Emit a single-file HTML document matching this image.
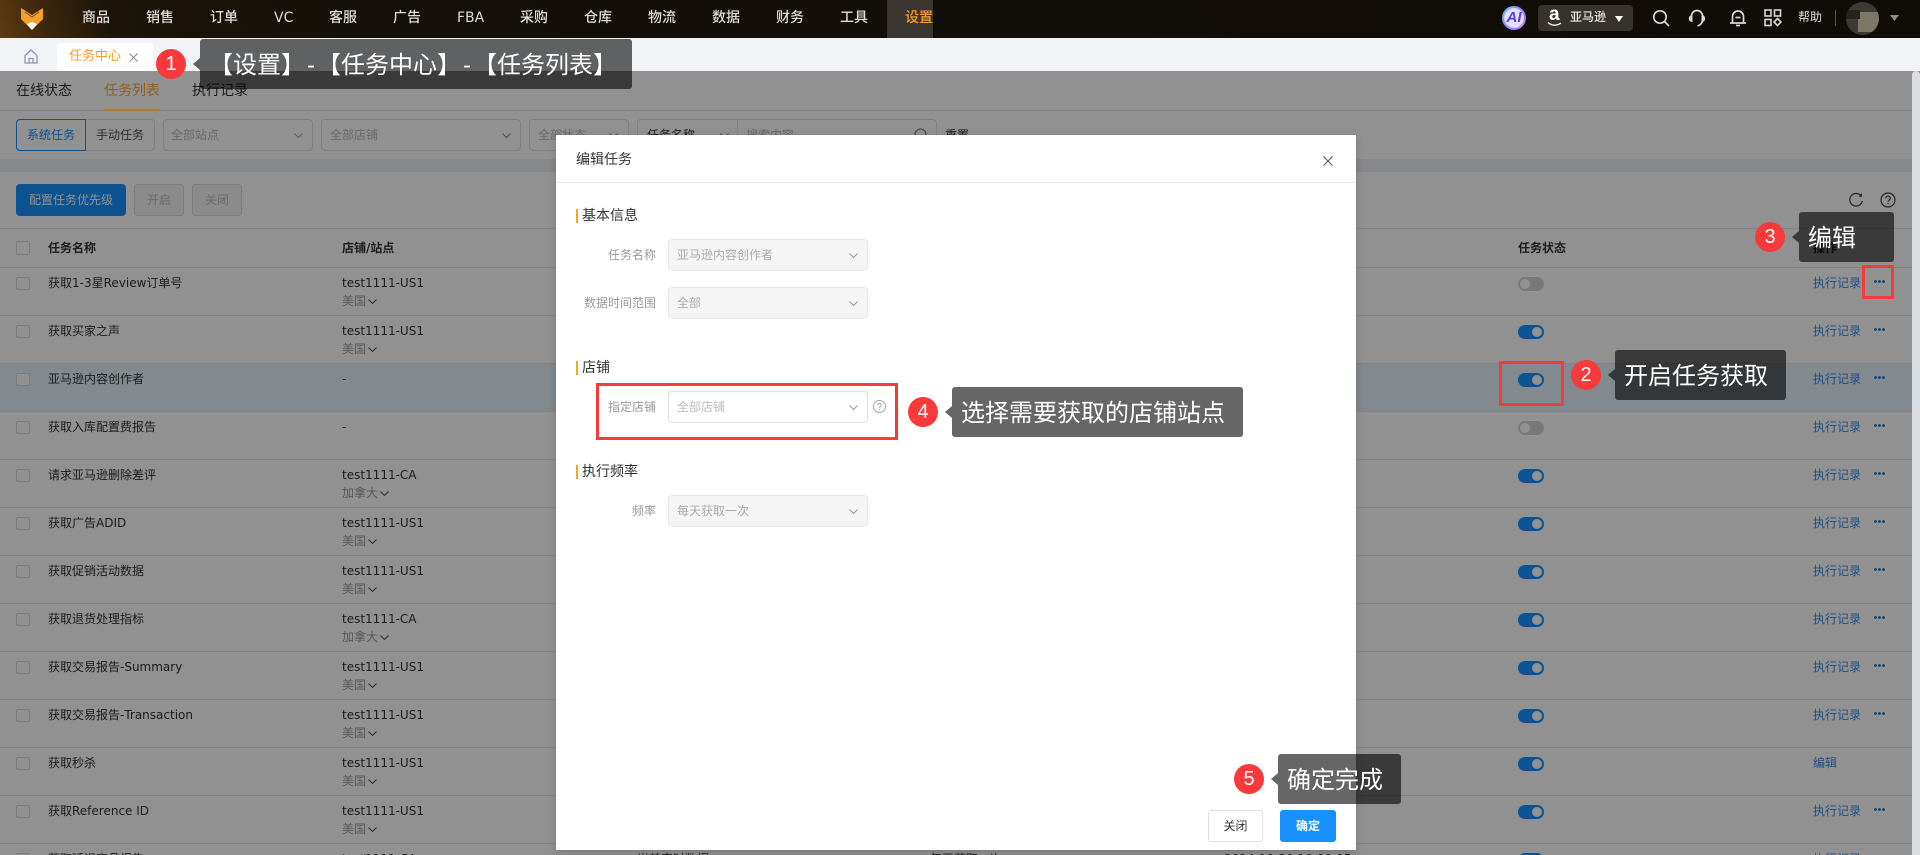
<!DOCTYPE html>
<html lang="zh-CN">
<head>
<meta charset="utf-8">
<title>任务列表</title>
<style>
*{box-sizing:border-box}
html,body{margin:0;padding:0;width:1920px;height:855px;overflow:hidden;background:#fff}
body{position:relative;font-family:"DejaVu Sans","Noto Sans CJK SC",sans-serif;font-size:12px;color:#333}
.a{position:absolute;white-space:nowrap}
svg{position:absolute;display:block;overflow:visible}
#nav{left:0;top:0;width:1920px;height:38px;background:linear-gradient(72deg,#5e3c12 0,#3e280d 45px,#1c1409 110px,#140f08 340px,#100c07 100%)}
.m{top:8px;font-size:14px;line-height:20px;color:#dcdcdc;font-weight:500}
#tabs{left:0;top:38px;width:1920px;height:33px;background:#f1f3f7}
#ov{left:0;top:71px;width:1920px;height:784px;background:rgba(0,0,0,.43);z-index:5}
#sb{left:1912px;top:71px;width:8px;height:784px;background:#dcdde2;border-radius:4px 4px 0 0;z-index:6}
.sel{height:32px;border:1px solid #dcdfe6;border-radius:4px;background:#fff}
.ph{color:#bbb;line-height:16px;top:127px}
.r{position:absolute;left:0;width:1912px;height:48px;border-top:1px solid #e6e6e6}
.r .c{position:absolute;left:16px;top:9px;width:14px;height:13px;border:1px solid #d9d9d9;border-radius:2px;background:#fff}
.r span,.r em{position:absolute;white-space:nowrap;line-height:16px;font-style:normal}
.r .n{left:48px;top:7px}
.r .s{left:342px;top:7px}
.r em{left:342px;top:25px;color:#999}
.r .l{left:1813px;top:7px;color:#3f8ae6}
.r .d{position:absolute;left:1874px;top:12px;width:11px;height:3px;background:radial-gradient(circle at 1.5px 1.5px,#2a80e0 1.4px,transparent 1.5px) 0 0/4px 3px repeat-x}
.t{position:absolute;left:1518px;top:9px;width:26px;height:14px;border-radius:7px;background:#1890ff}
.t:after{content:"";position:absolute;left:14px;top:2px;width:10px;height:10px;border-radius:50%;background:#fff}
.t.o{background:#d2d4d9}
.t.o:after{left:2px}
.cv{width:9px;height:5px}
svg.v{position:static;display:inline-block;width:9px;height:5px;margin-left:2px;vertical-align:1px;fill:none;stroke:#555;stroke-width:1.1}
#modal{left:556px;top:135px;width:800px;height:715px;background:#fff;z-index:7;box-shadow:0 2px 8px rgba(0,0,0,.18)}
.st{left:20px;font-size:14px;line-height:14px;height:14px;padding-left:4px;border-left:2px solid #f5a623;color:#333}
.lb{width:80px;left:20px;text-align:right;color:#999;line-height:16px}
.ms{left:112px;width:200px;height:32px;background:#f5f5f5;border:1px solid #e4e7ed;border-radius:4px;color:#aaa;line-height:30px;padding-left:8px}
.ms svg{left:180px;top:13px}
.bd{width:30px;height:30px;border-radius:50%;background:#f93a3a;color:#fff;font:20px/30px "Liberation Sans","Noto Sans CJK SC",sans-serif;text-align:center;z-index:9}
.tp{height:50px;background:rgba(0,0,0,.6);border-radius:3px;color:#fff;font:24px/53px "Liberation Sans","Noto Sans CJK SC",sans-serif;z-index:9;padding:0 9px}
.tp:before{content:"";position:absolute;left:-7px;top:19px;border-style:solid;border-width:6px 7px 6px 0;border-color:transparent rgba(0,0,0,.6) transparent transparent}
.tp u{text-decoration:none;margin:0 2px}
.rb{border:3px solid #f93a3a;z-index:9}
</style>
</head>
<body>

<div class="a" id="nav"></div>
<svg style="left:21px;top:8px;z-index:1" width="22" height="22" viewBox="0 0 22 22"><path d="M0 0L11 7 22 0V11L11 22 0 11Z" fill="#f5a02c"/><path d="M4 4L11 9 18 4" fill="none" stroke="#7c4a12" stroke-width="1"/><path d="M6 16L11 14 16 16 11 22Z" fill="#fff"/></svg>
<div class="a m" style="left:82px">商品</div>
<div class="a m" style="left:146px">销售</div>
<div class="a m" style="left:210px">订单</div>
<div class="a m" style="left:274px">VC</div>
<div class="a m" style="left:329px">客服</div>
<div class="a m" style="left:393px">广告</div>
<div class="a m" style="left:457px">FBA</div>
<div class="a m" style="left:520px">采购</div>
<div class="a m" style="left:584px">仓库</div>
<div class="a m" style="left:648px">物流</div>
<div class="a m" style="left:712px">数据</div>
<div class="a m" style="left:776px">财务</div>
<div class="a m" style="left:840px">工具</div>
<div class="a" style="left:887px;top:0;width:46px;height:38px;background:#3a352e"></div>
<div class="a m" style="left:905px;color:#f89b2e">设置</div>

<div class="a" style="left:1502px;top:6px;width:24px;height:24px;border-radius:50%;background:radial-gradient(circle,#efeaff 0,#e2dcff 55%,rgba(226,220,255,0) 62%),linear-gradient(135deg,#63c8ff,#8f7bff 50%,#c77bff);text-align:center;font:italic 700 15px/24px 'Liberation Sans',sans-serif;color:#5240e0">AI</div>
<div class="a" style="left:1538px;top:5px;width:95px;height:26px;background:#37332c;border-radius:4px"></div>
<div class="a" style="left:1549px;top:4px;font:700 19px/22px 'Liberation Sans',sans-serif;color:#fff">a</div>
<svg style="left:1548px;top:22px" width="14" height="4" viewBox="0 0 14 4"><path d="M0 0.5C4 4 9 4 13 1" fill="none" stroke="#fff" stroke-width="1.4"/></svg>
<div class="a" style="left:1570px;top:9px;color:#e8e8e8;line-height:17px;font-weight:500">亚马逊</div>
<svg style="left:1615px;top:16px" width="8" height="6" viewBox="0 0 8 6"><path d="M0 0H8L4 6Z" fill="#fff"/></svg>
<svg style="left:1652px;top:9px" width="18" height="18" viewBox="0 0 18 18" fill="none" stroke="#d8d8d8" stroke-width="1.7"><circle cx="8" cy="8" r="6.2"/><path d="M12.5 12.500L17 17"/></svg>
<svg style="left:1688px;top:9px" width="18" height="18" viewBox="0 0 18 18" fill="none" stroke="#d8d8d8" stroke-width="1.7"><path d="M3.500 7a5.500 5.500 0 0 1 11 0v4c0 3-2 5-5 6"/><path d="M4 6.500C0.500 7 0.500 12 4 12.500Z" fill="#d8d8d8" stroke-width="1"/><path d="M14 6.500C17.500 7 17.500 12 14 12.500Z" fill="#d8d8d8" stroke-width="1"/></svg>
<svg style="left:1729px;top:9px" width="18" height="18" viewBox="0 0 18 18" fill="none" stroke="#d8d8d8" stroke-width="1.7"><path d="M1 14H17M3.500 14V7.500a5.500 5.500 0 0 1 11 0V14"/><path d="M6.500 8.500H11.500"/><path d="M7 16.500H11"/></svg>
<svg style="left:1764px;top:9px" width="18" height="18" viewBox="0 0 18 18" fill="none" stroke="#d8d8d8" stroke-width="1.6"><rect x="1" y="1" width="6" height="6"/><rect x="10.500" y="1" width="6" height="6"/><rect x="1" y="10.500" width="6" height="6"/><path d="M13.500 9.500L17 13 13.500 16.500 10 13Z"/></svg>
<div class="a" style="left:1798px;top:9px;color:#ddd;line-height:17px">帮助</div>
<div class="a" style="left:1835px;top:10px;width:1px;height:16px;background:#55514b"></div>
<div class="a" style="left:1846px;top:2px;width:33px;height:33px;border-radius:50%;overflow:hidden;background:#3b3a35"><div class="a" style="left:12px;top:10px;width:21px;height:20px;background:#7d7768"></div><div class="a" style="left:0;top:8px;width:14px;height:9px;background:#24241f"></div></div>
<svg style="left:1890px;top:15px" width="9" height="6" viewBox="0 0 9 6"><path d="M0 0H9L4.500 6Z" fill="#8c8a85"/></svg>

<div class="a" id="tabs"></div>
<svg style="left:24px;top:49px" width="14" height="15" viewBox="0 0 14 15" fill="none" stroke="#8a97a8" stroke-width="1.300"><path d="M1 6.500L7 1 13 6.500V14H1Z"/><path d="M5 14V9.500H9V14"/></svg>
<div class="a" style="left:57px;top:43px;width:96px;height:28px;background:#fff;border-radius:4px 4px 0 0"></div>
<div class="a" style="left:69px;top:48px;font-size:13px;line-height:18px;color:#f89b2e">任务中心</div>
<svg style="left:129px;top:53px" width="9" height="9" viewBox="0 0 9 9" stroke="#888" fill="none"><path d="M0.500 0.500L8.500 8.500M8.500 0.500L0.500 8.500"/></svg>

<div class="a" style="left:16px;top:81px;font-size:14px;line-height:20px">在线状态</div>
<div class="a" style="left:104px;top:81px;font-size:14px;line-height:20px;color:#8f5f1c;z-index:6">任务列表</div>
<div class="a" style="left:192px;top:81px;font-size:14px;line-height:20px">执行记录</div>
<div class="a" style="left:0;top:110px;width:1912px;height:1px;background:#e8e8e8"></div>
<div class="a" style="left:104px;top:109px;width:56px;height:2px;background:#b07a30;z-index:6"></div>

<div class="a sel" style="left:16px;top:119px;width:139px"></div>
<div class="a" style="left:16px;top:119px;width:70px;height:32px;border:1px solid #1890ff;border-radius:4px 0 0 4px;color:#1890ff;text-align:center;line-height:30px">系统任务</div>
<div class="a" style="left:96px;top:127px;line-height:16px;color:#555">手动任务</div>
<div class="a sel" style="left:163px;top:119px;width:150px"></div>
<div class="a ph" style="left:171px">全部站点</div>
<svg class="cv" style="left:294px;top:133px" viewBox="0 0 9 5" fill="none" stroke="#aaa"><path d="M0.500 0.500L4.500 4.500 8.500 0.500"/></svg>
<div class="a sel" style="left:321px;top:119px;width:200px"></div>
<div class="a ph" style="left:330px">全部店铺</div>
<svg class="cv" style="left:502px;top:133px" viewBox="0 0 9 5" fill="none" stroke="#888"><path d="M0.500 0.500L4.500 4.500 8.500 0.500"/></svg>
<div class="a sel" style="left:529px;top:119px;width:100px"></div>
<div class="a ph" style="left:538px">全部状态</div>
<svg class="cv" style="left:609px;top:133px" viewBox="0 0 9 5" fill="none" stroke="#888"><path d="M0.500 0.500L4.500 4.500 8.500 0.500"/></svg>
<div class="a sel" style="left:637px;top:119px;width:300px"></div>
<div class="a" style="left:737px;top:119px;width:1px;height:32px;background:#dcdfe6"></div>
<div class="a" style="left:647px;top:127px;line-height:16px;color:#333">任务名称</div>
<svg class="cv" style="left:720px;top:133px" viewBox="0 0 9 5" fill="none" stroke="#888"><path d="M0.500 0.500L4.500 4.500 8.500 0.500"/></svg>
<div class="a ph" style="left:746px">搜索内容</div>
<svg style="left:914px;top:128px" width="14" height="14" viewBox="0 0 14 14" fill="none" stroke="#666"><circle cx="6.500" cy="6.500" r="5.500"/><path d="M10.500 10.500L13.500 13.500"/></svg>
<div class="a" style="left:945px;top:127px;line-height:16px">重置</div>

<div class="a" style="left:0;top:159px;width:1912px;height:13px;background:#eef0f2"></div>

<div class="a" style="left:16px;top:184px;width:110px;height:32px;background:#1890ff;border-radius:4px;color:#fff;text-align:center;line-height:32px">配置任务优先级</div>
<div class="a" style="left:134px;top:184px;width:50px;height:32px;background:#f5f5f5;border:1px solid #d9d9d9;border-radius:4px;color:#bbb;text-align:center;line-height:30px">开启</div>
<div class="a" style="left:192px;top:184px;width:50px;height:32px;background:#f5f5f5;border:1px solid #d9d9d9;border-radius:4px;color:#bbb;text-align:center;line-height:30px">关闭</div>
<svg style="left:1849px;top:193px" width="14" height="14" viewBox="0 0 14 14" fill="none" stroke="#444" stroke-width="1.200"><path d="M12 2.800A6.300 6.300 0 1 0 13.300 8"/><path d="M12.300 0.500V3.200H10"/></svg>
<svg style="left:1880px;top:192px" width="16" height="16" viewBox="0 0 16 16" fill="none" stroke="#444" stroke-width="1.200"><circle cx="8" cy="8" r="7"/><path d="M5.800 6.300C5.800 3.500 10.300 3.500 10.300 6.300 10.300 8 8 8 8 9.800"/><path d="M8 11V12.200"/></svg>

<div class="r" style="top:228px;height:39px"><i class="c" style="top:12px;height:14px"></i><span class="n" style="top:11px;font-weight:700">任务名称</span><span class="s" style="top:11px;font-weight:700">店铺/站点</span><span style="left:1518px;top:11px;font-weight:700">任务状态</span><span style="left:1813px;top:11px;font-weight:700">操作</span></div>

<div class="r" style="top:267px"><i class="c"></i><span class="n">获取1-3星Review订单号</span><span class="s">test1111-US1</span><em>美国<svg class="v" viewBox="0 0 9 5"><path d="M0.500 0.500L4.500 4.500 8.500 0.500"/></svg></em><b class="t o"></b><span class="l">执行记录</span><i class="d"></i></div>
<div class="r" style="top:315px"><i class="c"></i><span class="n">获取买家之声</span><span class="s">test1111-US1</span><em>美国<svg class="v" viewBox="0 0 9 5"><path d="M0.500 0.500L4.500 4.500 8.500 0.500"/></svg></em><b class="t"></b><span class="l">执行记录</span><i class="d"></i></div>
<div class="r" style="top:363px;background:#e5f1fb"><i class="c"></i><span class="n">亚马逊内容创作者</span><span class="s">-</span><b class="t"></b><span class="l">执行记录</span><i class="d"></i></div>
<div class="r" style="top:411px"><i class="c"></i><span class="n">获取入库配置费报告</span><span class="s">-</span><b class="t o"></b><span class="l">执行记录</span><i class="d"></i></div>
<div class="r" style="top:459px"><i class="c"></i><span class="n">请求亚马逊删除差评</span><span class="s">test1111-CA</span><em>加拿大<svg class="v" viewBox="0 0 9 5"><path d="M0.500 0.500L4.500 4.500 8.500 0.500"/></svg></em><b class="t"></b><span class="l">执行记录</span><i class="d"></i></div>
<div class="r" style="top:507px"><i class="c"></i><span class="n">获取广告ADID</span><span class="s">test1111-US1</span><em>美国<svg class="v" viewBox="0 0 9 5"><path d="M0.500 0.500L4.500 4.500 8.500 0.500"/></svg></em><b class="t"></b><span class="l">执行记录</span><i class="d"></i></div>
<div class="r" style="top:555px"><i class="c"></i><span class="n">获取促销活动数据</span><span class="s">test1111-US1</span><em>美国<svg class="v" viewBox="0 0 9 5"><path d="M0.500 0.500L4.500 4.500 8.500 0.500"/></svg></em><b class="t"></b><span class="l">执行记录</span><i class="d"></i></div>
<div class="r" style="top:603px"><i class="c"></i><span class="n">获取退货处理指标</span><span class="s">test1111-CA</span><em>加拿大<svg class="v" viewBox="0 0 9 5"><path d="M0.500 0.500L4.500 4.500 8.500 0.500"/></svg></em><b class="t"></b><span class="l">执行记录</span><i class="d"></i></div>
<div class="r" style="top:651px"><i class="c"></i><span class="n">获取交易报告-Summary</span><span class="s">test1111-US1</span><em>美国<svg class="v" viewBox="0 0 9 5"><path d="M0.500 0.500L4.500 4.500 8.500 0.500"/></svg></em><b class="t"></b><span class="l">执行记录</span><i class="d"></i></div>
<div class="r" style="top:699px"><i class="c"></i><span class="n">获取交易报告-Transaction</span><span class="s">test1111-US1</span><em>美国<svg class="v" viewBox="0 0 9 5"><path d="M0.500 0.500L4.500 4.500 8.500 0.500"/></svg></em><b class="t"></b><span class="l">执行记录</span><i class="d"></i></div>
<div class="r" style="top:747px"><i class="c"></i><span class="n">获取秒杀</span><span class="s">test1111-US1</span><em>美国<svg class="v" viewBox="0 0 9 5"><path d="M0.500 0.500L4.500 4.500 8.500 0.500"/></svg></em><b class="t"></b><span class="l">编辑</span></div>
<div class="r" style="top:795px"><i class="c"></i><span class="n">获取Reference ID</span><span class="s">test1111-US1</span><em>美国<svg class="v" viewBox="0 0 9 5"><path d="M0.500 0.500L4.500 4.500 8.500 0.500"/></svg></em><b class="t"></b><span class="l">执行记录</span><i class="d"></i></div>
<div class="r" style="top:843px;height:12px;overflow:hidden"><i class="c"></i><span class="n">获取延迟商品报告</span><span class="s">test1111-CA</span><span style="left:637px;top:7px">当前实时数据</span><span style="left:930px;top:7px">每天获取一次</span><span style="left:1224px;top:7px">2024-10-20 10:00:05</span><b class="t"></b><span class="l">执行记录</span></div>

<div class="a" id="ov"></div>
<div class="a" id="sb"></div>

<div class="a" id="modal">
  <div class="a" style="left:20px;top:15px;font-size:14px;line-height:20px;color:#333">编辑任务</div>
  <svg style="left:767px;top:21px" width="10" height="10" viewBox="0 0 10 10" fill="none" stroke="#555" stroke-width="1.100"><path d="M0.500 0.500L9.500 9.500M9.500 0.500L0.500 9.500"/></svg>
  <div class="a" style="left:0;top:47px;width:800px;height:1px;background:#e4e6eb"></div>

  <div class="a st" style="top:74px">基本信息</div>
  <div class="a lb" style="top:112px">任务名称</div>
  <div class="a ms" style="top:104px">亚马逊内容创作者<svg class="cv" viewBox="0 0 9 5" fill="none" stroke="#999"><path d="M0.500 0.500L4.500 4.500 8.500 0.500"/></svg></div>
  <div class="a lb" style="top:160px">数据时间范围</div>
  <div class="a ms" style="top:152px">全部<svg class="cv" viewBox="0 0 9 5" fill="none" stroke="#999"><path d="M0.500 0.500L4.500 4.500 8.500 0.500"/></svg></div>

  <div class="a st" style="top:226px">店铺</div>
  <div class="a lb" style="top:264px">指定店铺</div>
  <div class="a ms" style="top:256px;background:#fff;border-color:#dcdfe6;color:#bbb">全部店铺<svg class="cv" viewBox="0 0 9 5" fill="none" stroke="#999"><path d="M0.500 0.500L4.500 4.500 8.500 0.500"/></svg></div>
  <svg style="left:317px;top:265px" width="13" height="13" viewBox="0 0 13 13" fill="none" stroke="#aaa"><circle cx="6.500" cy="6.500" r="6"/><path d="M4.700 5C4.700 2.800 8.300 2.800 8.300 5 8.300 6.400 6.500 6.400 6.500 8"/><path d="M6.500 9V10"/></svg>

  <div class="a st" style="top:330px">执行频率</div>
  <div class="a lb" style="top:368px">频率</div>
  <div class="a ms" style="top:360px">每天获取一次<svg class="cv" viewBox="0 0 9 5" fill="none" stroke="#999"><path d="M0.500 0.500L4.500 4.500 8.500 0.500"/></svg></div>

  <div class="a" style="left:652px;top:675px;width:55px;height:32px;border:1px solid #dcdfe6;border-radius:3px;background:#fff;text-align:center;line-height:30px;color:#333">关闭</div>
  <div class="a" style="left:724px;top:675px;width:56px;height:32px;border-radius:3px;background:#1890ff;text-align:center;line-height:32px;color:#fff;font-weight:700">确定</div>
</div>

<div class="a bd" style="left:156px;top:49px">1</div>
<div class="a tp" style="left:200px;top:39px;width:432px">【设置】<u>-</u>【任务中心】<u>-</u>【任务列表】</div>

<div class="a rb" style="left:1862px;top:265px;width:32px;height:34px"></div>
<div class="a bd" style="left:1755px;top:222px">3</div>
<div class="a tp" style="left:1799px;top:212px;width:95px">编辑</div>

<div class="a rb" style="left:1499px;top:361px;width:65px;height:45px"></div>
<div class="a bd" style="left:1571px;top:360px">2</div>
<div class="a tp" style="left:1615px;top:350px;width:171px">开启任务获取</div>

<div class="a rb" style="left:596px;top:383px;width:302px;height:57px"></div>
<div class="a bd" style="left:908px;top:397px">4</div>
<div class="a tp" style="left:952px;top:387px;width:291px">选择需要获取的店铺站点</div>

<div class="a bd" style="left:1234px;top:764px">5</div>
<div class="a tp" style="left:1278px;top:754px;width:123px">确定完成</div>

</body>
</html>
